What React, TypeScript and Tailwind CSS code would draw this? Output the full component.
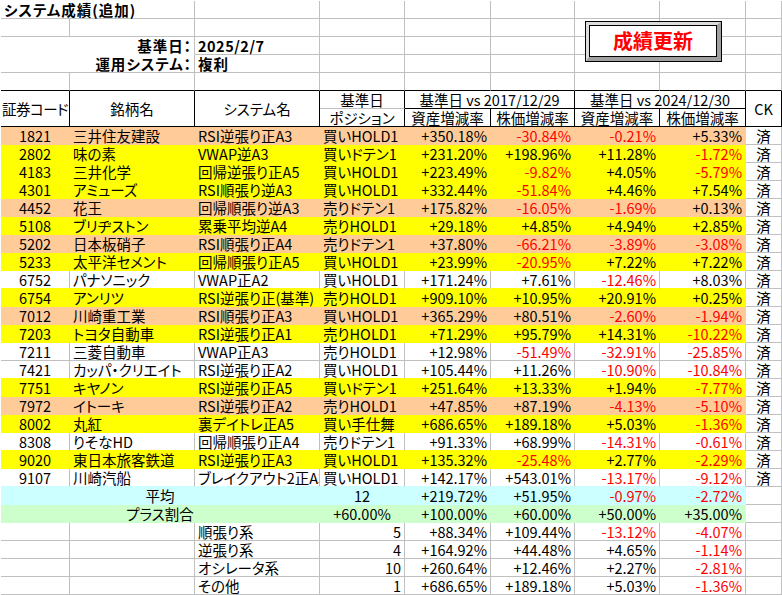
import React from "react";

type Fill = "o" | "y" | "w";

type Row = {
  code: string;
  name: string;
  sys: string;
  pos: string;
  v: string[];
  fill: Fill;
};

const rows: Row[] = [
  { code: "1821", name: "三井住友建設", sys: "RSI逆張り正A3", pos: "買いHOLD1", v: ["+350.18%", "-30.84%", "-0.21%", "+5.33%"], fill: "o" },
  { code: "2802", name: "味の素", sys: "VWAP逆A3", pos: "買いドテン1", v: ["+231.20%", "+198.96%", "+11.28%", "-1.72%"], fill: "y" },
  { code: "4183", name: "三井化学", sys: "回帰逆張り正A5", pos: "買いHOLD1", v: ["+223.49%", "-9.82%", "+4.05%", "-5.79%"], fill: "y" },
  { code: "4301", name: "アミューズ", sys: "RSI順張り逆A3", pos: "買いHOLD1", v: ["+332.44%", "-51.84%", "+4.46%", "+7.54%"], fill: "y" },
  { code: "4452", name: "花王", sys: "回帰順張り逆A3", pos: "売りドテン1", v: ["+175.82%", "-16.05%", "-1.69%", "+0.13%"], fill: "o" },
  { code: "5108", name: "ブリヂストン", sys: "累乗平均逆A4", pos: "売りHOLD1", v: ["+29.18%", "+4.85%", "+4.94%", "+2.85%"], fill: "y" },
  { code: "5202", name: "日本板硝子", sys: "RSI順張り正A4", pos: "売りドテン1", v: ["+37.80%", "-66.21%", "-3.89%", "-3.08%"], fill: "o" },
  { code: "5233", name: "太平洋セメント", sys: "回帰順張り正A5", pos: "買いHOLD1", v: ["+23.99%", "-20.95%", "+7.22%", "+7.22%"], fill: "y" },
  { code: "6752", name: "パナソニック", sys: "VWAP正A2", pos: "買いHOLD1", v: ["+171.24%", "+7.61%", "-12.46%", "+8.03%"], fill: "w" },
  { code: "6754", name: "アンリツ", sys: "RSI逆張り正(基準)", pos: "売りHOLD1", v: ["+909.10%", "+10.95%", "+20.91%", "+0.25%"], fill: "y" },
  { code: "7012", name: "川崎重工業", sys: "RSI順張り正A3", pos: "買いHOLD1", v: ["+365.29%", "+80.51%", "-2.60%", "-1.94%"], fill: "o" },
  { code: "7203", name: "トヨタ自動車", sys: "RSI逆張り正A1", pos: "売りHOLD1", v: ["+71.29%", "+95.79%", "+14.31%", "-10.22%"], fill: "y" },
  { code: "7211", name: "三菱自動車", sys: "VWAP正A3", pos: "売りHOLD1", v: ["+12.98%", "-51.49%", "-32.91%", "-25.85%"], fill: "w" },
  { code: "7421", name: "カッパ・クリエイト", sys: "RSI逆張り正A2", pos: "買いHOLD1", v: ["+105.44%", "+11.26%", "-10.90%", "-10.84%"], fill: "w" },
  { code: "7751", name: "キヤノン", sys: "RSI逆張り正A5", pos: "買いドテン1", v: ["+251.64%", "+13.33%", "+1.94%", "-7.77%"], fill: "y" },
  { code: "7972", name: "イトーキ", sys: "RSI逆張り正A2", pos: "売りHOLD1", v: ["+47.85%", "+87.19%", "-4.13%", "-5.10%"], fill: "o" },
  { code: "8002", name: "丸紅", sys: "裏デイトレ正A5", pos: "買い手仕舞", v: ["+686.65%", "+189.18%", "+5.03%", "-1.36%"], fill: "y" },
  { code: "8308", name: "りそなHD", sys: "回帰順張り正A4", pos: "売りドテン1", v: ["+91.33%", "+68.99%", "-14.31%", "-0.61%"], fill: "w" },
  { code: "9020", name: "東日本旅客鉄道", sys: "RSI逆張り正A3", pos: "買いHOLD1", v: ["+135.32%", "-25.48%", "+2.77%", "-2.29%"], fill: "y" },
  { code: "9107", name: "川崎汽船", sys: "ブレイクアウト2正A3", pos: "買いHOLD1", v: ["+142.17%", "+543.01%", "-13.17%", "-9.12%"], fill: "w" },
];

const groups = [
  { label: "順張り系", n: "5", v: ["+88.34%", "+109.44%", "-13.12%", "-4.07%"] },
  { label: "逆張り系", n: "4", v: ["+164.92%", "+44.48%", "+4.65%", "-1.14%"] },
  { label: "オシレータ系", n: "10", v: ["+260.64%", "+12.46%", "+2.27%", "-2.81%"] },
  { label: "その他", n: "1", v: ["+686.65%", "+189.18%", "+5.03%", "-1.36%"] },
];

const BG = { o: "bg-[#ffcc99]", y: "bg-[#ffff00]", w: "bg-white" };
const BR = { o: "border-r-[#ffcc99]", y: "border-r-[#ffff00]", w: "border-r-[#c0c0c0]" };
const BB = { o: "border-b-[#ffcc99]", y: "border-b-[#ffff00]", w: "border-b-[#c0c0c0]" };

const cell = "flex items-center whitespace-nowrap border-r border-b";
const grid = "border-r-[#c0c0c0] border-b-[#c0c0c0]";
const hd = "justify-center border-r-black border-b-black";

const red = (s: string) => (s.startsWith("-") ? "text-[#ff0000]" : "");

const App = () => {
  return (
    <div className="relative w-[782px] h-[595px] overflow-hidden bg-white pt-px pl-px text-black font-['Noto_Sans_CJK_JP','Liberation_Sans',sans-serif] text-[14.5px] leading-[17px] [font-feature-settings:'palt']">
      <div className="grid grid-cols-[69px_125px_125px_85px_86px_84px_85px_86px_36px] auto-rows-[18px]">
        {/* row 1 */}
        <div className={`${cell} ${grid} col-span-2 pl-[3px] font-bold tracking-[1px]`}>システム成績(追加)</div>
        {Array.from({ length: 7 }).map((_, i) => (
          <div key={`r1-${i}`} className={`${cell} ${grid}`} />
        ))}
        {/* row 2 */}
        {Array.from({ length: 9 }).map((_, i) => (
          <div key={`r2-${i}`} className={`${cell} ${grid}`} />
        ))}
        {/* row 3 */}
        <div className={`${cell} col-span-2 justify-end pr-[2px] font-bold tracking-[1px] border-r-[#c0c0c0] border-b-white`}>基準日：</div>
        <div className={`${cell} ${grid} pl-[3px] font-bold tracking-[0.5px]`}>2025/2/7</div>
        {Array.from({ length: 6 }).map((_, i) => (
          <div key={`r3-${i}`} className={`${cell} ${grid}`} />
        ))}
        {/* row 4 */}
        <div className={`${cell} ${grid} col-span-2 justify-end pr-[2px] font-bold tracking-[1px]`}>運用システム：</div>
        <div className={`${cell} ${grid} pl-[3px] font-bold tracking-[1px]`}>複利</div>
        {Array.from({ length: 6 }).map((_, i) => (
          <div key={`r4-${i}`} className={`${cell} ${grid}`} />
        ))}
        {/* row 5 */}
        {Array.from({ length: 9 }).map((_, i) => (
          <div key={`r5-${i}`} className={`${cell} border-r-[#c0c0c0] border-b-black`} />
        ))}

        {/* header rows 6-7 */}
        <div className={`${cell} ${hd} row-span-2 tracking-[-0.5px]`}>証券コード</div>
        <div className={`${cell} ${hd} row-span-2`}>銘柄名</div>
        <div className={`${cell} ${hd} row-span-2`}>システム名</div>
        <div className={`${cell} justify-center border-r-black border-b-[#c0c0c0]`}>基準日</div>
        <div className={`${cell} ${hd} col-span-2`}>基準日 vs 2017/12/29</div>
        <div className={`${cell} ${hd} col-span-2`}>基準日 vs 2024/12/30</div>
        <div className={`${cell} ${hd} row-span-2`}>CK</div>
        <div className={`${cell} ${hd}`}>ポジション</div>
        <div className={`${cell} ${hd}`}>資産増減率</div>
        <div className={`${cell} ${hd}`}>株価増減率</div>
        <div className={`${cell} ${hd}`}>資産増減率</div>
        <div className={`${cell} ${hd}`}>株価増減率</div>

        {/* data rows */}
        {rows.map((r, i) => {
          const next: Fill | "c" = i + 1 < rows.length ? rows[i + 1].fill : "c";
          const bb =
            r.fill !== "w"
              ? BB[r.fill]
              : next === "c"
              ? "border-b-[#ccffff]"
              : BB[next];
          const base = `${cell} ${BG[r.fill]} ${BR[r.fill]} ${bb}`;
          // long system names are cut at the next column like Excel does
          const clip = r.sys.length > 10 ? "overflow-x-clip" : "";
          return (
            <React.Fragment key={r.code}>
              <div className={`${base} justify-center`}>{r.code}</div>
              <div className={`${base} pl-[3px]`}>{r.name}</div>
              <div className={`${base} pl-[3px] ${clip}`}>{r.sys}</div>
              <div className={`${base} pl-[3px]`}>{r.pos}</div>
              {r.v.map((v, j) => (
                <div key={j} className={`${base} justify-end pr-[3px] ${red(v)}`}>
                  {v}
                </div>
              ))}
              <div className={`${cell} ${grid} justify-center`}>済</div>
            </React.Fragment>
          );
        })}

        {/* average */}
        <div className={`${cell} col-span-3 justify-center bg-[#ccffff] border-r-[#ccffff] border-b-[#ccffff]`}>平均</div>
        <div className={`${cell} justify-center bg-[#ccffff] border-r-[#ccffff] border-b-[#ccffff]`}>12</div>
        {["+219.72%", "+51.95%", "-0.97%", "-2.72%"].map((v, j) => (
          <div key={`avg-${j}`} className={`${cell} justify-end pr-[3px] bg-[#ccffff] border-r-[#ccffff] border-b-[#ccffff] ${red(v)}`}>
            {v}
          </div>
        ))}
        <div className={`${cell} ${grid}`} />

        {/* plus ratio */}
        <div className={`${cell} col-span-3 justify-center bg-[#ccffcc] border-r-[#ccffcc] border-b-[#ccffcc]`}>プラス割合</div>
        <div className={`${cell} justify-center bg-[#ccffcc] border-r-[#ccffcc] border-b-[#ccffcc]`}>+60.00%</div>
        {["+100.00%", "+60.00%", "+50.00%", "+35.00%"].map((v, j) => (
          <div key={`plus-${j}`} className={`${cell} justify-end pr-[3px] bg-[#ccffcc] border-r-[#ccffcc] border-b-[#ccffcc]`}>
            {v}
          </div>
        ))}
        <div className={`${cell} ${grid}`} />

        {/* system groups */}
        {groups.map((g) => (
          <React.Fragment key={g.label}>
            <div className={`${cell} ${grid}`} />
            <div className={`${cell} ${grid}`} />
            <div className={`${cell} ${grid} pl-[3px]`}>{g.label}</div>
            <div className={`${cell} ${grid} justify-end pr-[3px]`}>{g.n}</div>
            {g.v.map((v, j) => (
              <div key={j} className={`${cell} ${grid} justify-end pr-[3px] ${red(v)}`}>
                {v}
              </div>
            ))}
            <div className={`${cell} ${grid}`} />
          </React.Fragment>
        ))}
      </div>

      {/* 成績更新 button floating over the sheet */}
      <div className="absolute left-[585px] top-[21px] w-[137px] h-[41px] border border-black bg-white">
        <div className="h-full w-full border-[3px] border-r-[4px] border-b-[4px] border-t-[#dcdcdc] border-l-[#dcdcdc] border-r-[#a0a0a0] border-b-[#a0a0a0]">
          <div className="flex h-full w-full items-center justify-center border border-black bg-white text-[20px] font-bold leading-none text-[#ff0000]">
            成績更新
          </div>
        </div>
      </div>
    </div>
  );
};

export default App;
